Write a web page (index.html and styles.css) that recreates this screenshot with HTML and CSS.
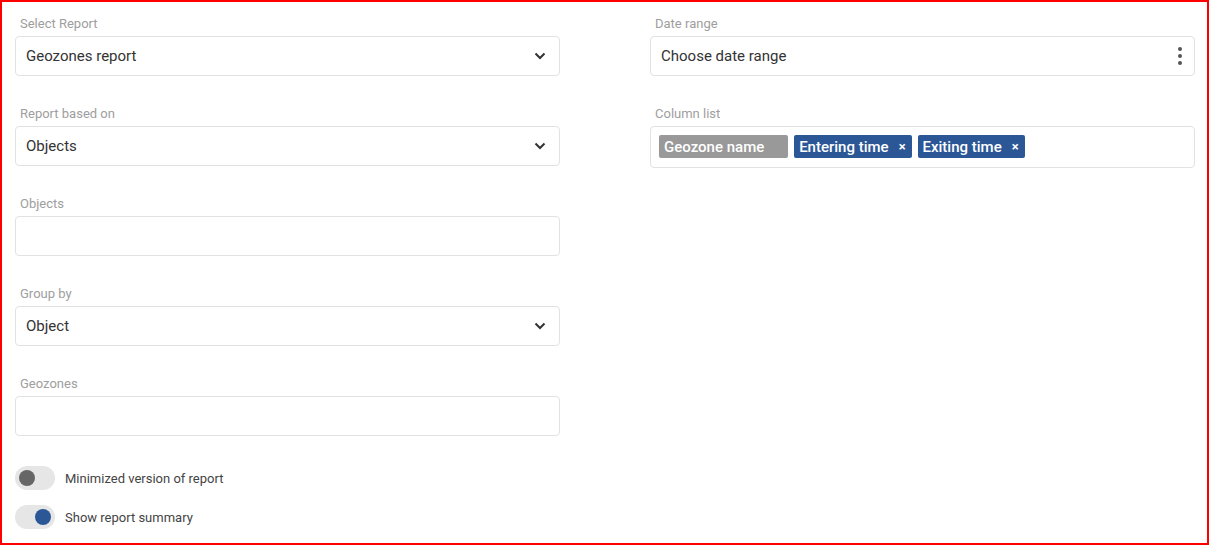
FILE: index.html
```html
<!DOCTYPE html>
<html>
<head>
<meta charset="utf-8">
<link rel="stylesheet" href="styles.css">
</head>
<body>
<div class="page">
  <div class="col">
    <div class="group">
      <div class="label">Select Report</div>
      <div class="field"><span class="value">Geozones report</span><svg class="chev" width="12" height="8" viewBox="0 0 12 8"><path d="M1.5 1.5 L6 6 L10.5 1.5" fill="none" stroke="#333" stroke-width="2"/></svg></div>
    </div>
    <div class="group">
      <div class="label">Report based on</div>
      <div class="field"><span class="value">Objects</span><svg class="chev" width="12" height="8" viewBox="0 0 12 8"><path d="M1.5 1.5 L6 6 L10.5 1.5" fill="none" stroke="#333" stroke-width="2"/></svg></div>
    </div>
    <div class="group">
      <div class="label">Objects</div>
      <div class="field"></div>
    </div>
    <div class="group">
      <div class="label">Group by</div>
      <div class="field"><span class="value">Object</span><svg class="chev" width="12" height="8" viewBox="0 0 12 8"><path d="M1.5 1.5 L6 6 L10.5 1.5" fill="none" stroke="#333" stroke-width="2"/></svg></div>
    </div>
    <div class="group last">
      <div class="label">Geozones</div>
      <div class="field"></div>
    </div>
    <div class="toggles">
      <div class="toggle-row"><span class="track"><span class="knob off"></span></span><span class="tlabel">Minimized version of report</span></div>
      <div class="toggle-row"><span class="track on"><span class="knob on"></span></span><span class="tlabel">Show report summary</span></div>
    </div>
  </div>
  <div class="col">
    <div class="group">
      <div class="label">Date range</div>
      <div class="field"><span class="value">Choose date range</span><svg class="dots" width="6" height="20" viewBox="0 0 6 20"><circle cx="3" cy="3" r="2" fill="#555"/><circle cx="3" cy="10" r="2" fill="#555"/><circle cx="3" cy="17" r="2" fill="#555"/></svg></div>
    </div>
    <div class="group">
      <div class="label">Column list</div>
      <div class="tagbox">
        <span class="tag gray">Geozone name<span class="x hidden">×</span></span>
        <span class="tag blue">Entering time<span class="x">×</span></span>
        <span class="tag blue">Exiting time<span class="x">×</span></span>
      </div>
    </div>
  </div>
</div>
</body>
</html>
```

FILE: styles.css
```css
html, body {
  margin: 0;
  padding: 0;
  background: #fff;
}
body {
  font-family: Roboto, "Liberation Sans", Arial, sans-serif;
}
.page {
  box-sizing: border-box;
  width: 1209px;
  height: 545px;
  border: 2px solid #ff0000;
  padding: 11px 0 0 13px;
  display: grid;
  grid-template-columns: 545px 545px;
  column-gap: 90px;
  align-items: start;
}
.col {
  display: flex;
  flex-direction: column;
}
.group {
  display: flex;
  flex-direction: column;
  margin-bottom: 27px;
}
.group.last {
  margin-bottom: 30px;
}
.label {
  font-size: 13px;
  line-height: 20px;
  color: #9e9e9e;
  padding: 1px 0 0 5px;
  margin-bottom: 2px;
}
.field {
  box-sizing: border-box;
  height: 40px;
  border: 1px solid #e2e2e2;
  border-radius: 4px;
  display: flex;
  align-items: center;
  padding: 0 13px 0 10px;
}
.value {
  flex: 1;
  font-size: 15px;
  color: #333;
}
.chev {
  display: block;
}
.dots {
  display: block;
  margin-right: -2px;
}
.tagbox {
  box-sizing: border-box;
  height: 42px;
  border: 1px solid #e2e2e2;
  border-radius: 4px;
  display: flex;
  align-items: flex-start;
  gap: 6px;
  padding: 8px 8px 0 8px;
}
.tag {
  display: inline-flex;
  align-items: center;
  height: 23px;
  padding: 0 6px 0 5px;
  border-radius: 2px;
  font-size: 15px;
  font-weight: 500;
  color: #fff;
}
.tag.gray {
  background: #999999;
  padding-right: 7px;
}
.tag.blue {
  background: #2b5797;
}
.x {
  font-size: 13px;
  font-weight: 700;
  margin-left: 10px;
}
.x.hidden {
  visibility: hidden;
}
.toggles {
  display: flex;
  flex-direction: column;
  gap: 15px;
}
.toggle-row {
  display: flex;
  align-items: center;
  height: 24px;
}
.track {
  position: relative;
  display: block;
  width: 40px;
  height: 24px;
  border-radius: 12px;
  background: #e6e6e6;
}
.knob {
  position: absolute;
  top: 4px;
  width: 16px;
  height: 16px;
  border-radius: 50%;
}
.knob.off {
  left: 4px;
  background: #666666;
}
.knob.on {
  left: 20px;
  background: #2b5797;
}
.tlabel {
  margin-left: 10px;
  font-size: 13px;
  color: #444;
}
```
